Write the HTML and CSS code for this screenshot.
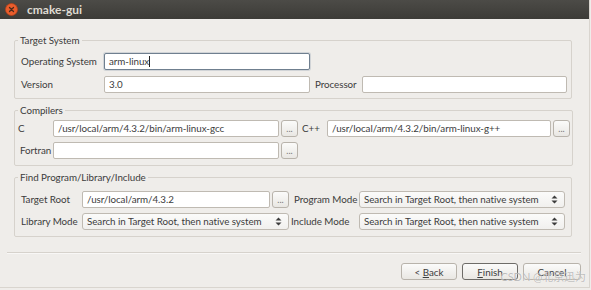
FILE: index.html
```html
<!DOCTYPE html>
<html lang="en">
<head>
    <meta charset="UTF-8">
    <title>cmake-gui</title>
    <link rel="stylesheet" href="styles.css">
</head>
<body>

    <div class="window">
        <div class="titlebar">
            <span class="close-btn">
                <svg width="13" height="13" viewBox="0 0 13 13">
                    <circle cx="6.5" cy="6.5" r="6" fill="#e95d2c" stroke="#b8431b" stroke-width="0.8"/>
                    <path d="M4.5 4.5 L8.5 8.5 M8.5 4.5 L4.5 8.5" stroke="#4a2a1c" stroke-width="1.3" stroke-linecap="round"/>
                </svg>
            </span>
            <span class="title">cmake-gui</span>
        </div>

        <div class="content">
            <!-- Target system -->
            <fieldset class="group group-target">
                <legend>Target System</legend>
                <div class="target-grid">
                    <label>Operating System</label>
                    <div class="input focused">arm-linux<span class="caret"></span></div>
                    <span></span>
                    <span></span>
                    <label>Version</label>
                    <div class="input">3.0</div>
                    <label>Processor</label>
                    <div class="input"></div>
                </div>
            </fieldset>

            <!-- Compilers -->
            <fieldset class="group group-compilers">
                <legend>Compilers</legend>
                <div class="compilers-grid">
                    <label>C</label>
                    <div class="input">/usr/local/arm/4.3.2/bin/arm-linux-gcc</div>
                    <button class="browse">...</button>
                    <label>C++</label>
                    <div class="input">/usr/local/arm/4.3.2/bin/arm-linux-g++</div>
                    <button class="browse">...</button>
                    <label>Fortran</label>
                    <div class="input"></div>
                    <button class="browse">...</button>
                </div>
            </fieldset>

            <!-- Find program / library / include -->
            <fieldset class="group group-find">
                <legend>Find Program/Library/Include</legend>
                <div class="find-grid">
                    <label>Target Root</label>
                    <div class="input">/usr/local/arm/4.3.2</div>
                    <button class="browse">...</button>
                    <label>Program Mode</label>
                    <div class="combo">Search in Target Root, then native system
                        <svg class="combo-arrows" width="7" height="9" viewBox="0 0 7 9"><path d="M3.5 0.5 L6.5 3.5 L0.5 3.5 Z M0.5 5.5 L6.5 5.5 L3.5 8.5 Z" fill="#3c3c3c"/></svg>
                    </div>
                    <label>Library Mode</label>
                    <div class="combo span-two">Search in Target Root, then native system
                        <svg class="combo-arrows" width="7" height="9" viewBox="0 0 7 9"><path d="M3.5 0.5 L6.5 3.5 L0.5 3.5 Z M0.5 5.5 L6.5 5.5 L3.5 8.5 Z" fill="#3c3c3c"/></svg>
                    </div>
                    <label>Include Mode</label>
                    <div class="combo">Search in Target Root, then native system
                        <svg class="combo-arrows" width="7" height="9" viewBox="0 0 7 9"><path d="M3.5 0.5 L6.5 3.5 L0.5 3.5 Z M0.5 5.5 L6.5 5.5 L3.5 8.5 Z" fill="#3c3c3c"/></svg>
                    </div>
                </div>
            </fieldset>

            <div class="separator"></div>

            <div class="buttons">
                <button class="btn">&lt; <u>B</u>ack</button>
                <button class="btn btn-default"><u>F</u>inish</button>
                <button class="btn">Cancel</button>
            </div>
        </div>

        <div class="watermark">CSDN @北京迅为</div>
    </div>

</body>
</html>
```

FILE: styles.css
```css
/* General reset */
* {
    margin: 0;
    padding: 0;
    box-sizing: border-box;
}

body {
    width: 591px;
    height: 290px;
    background: #efedea;
    font-family: Lato, "Noto Sans CJK SC", sans-serif;
    font-size: 9.8px;
    letter-spacing: -0.05px;
    color: #3c3c3c;
    overflow: hidden;
}

.window {
    position: relative;
    width: 590px;
    height: 288px;
    background: #efedea;
    border-right: 1px solid #d9d5cf;
    border-bottom: 1px solid #d9d5cf;
}

/* Title bar */
.titlebar {
    height: 19px;
    background: linear-gradient(#4c4b47, #3c3b37);
    display: flex;
    align-items: center;
    padding-left: 5px;
}

.close-btn {
    display: flex;
    width: 13px;
    height: 13px;
}

.title {
    margin-left: 9px;
    color: #dfdbd2;
    font-weight: bold;
    font-size: 12px;
    letter-spacing: 0;
}

/* Content */
.content {
    padding: 15px 17px 0 14px;
}

.group {
    border: 1px solid #d6d2cc;
    border-radius: 2px;
    padding: 0 2px 6px 6px;
}

.group legend {
    line-height: 12px;
    padding: 0 2px;
    margin-left: -3px;
}

.group-target {
    padding-top: 7px;
    padding-bottom: 5px;
}

.group-compilers {
    margin-top: 5px;
    padding-top: 4px;
    padding-left: 3px;
}

.group-compilers legend {
    margin-left: 0;
}

.group-find {
    margin-top: 5px;
    padding-top: 8px;
}

label {
    line-height: 17px;
    white-space: nowrap;
}

.target-grid {
    display: grid;
    grid-template-columns: 78px 206px 42px 205px;
    grid-auto-rows: 17px;
    column-gap: 5px;
    row-gap: 6px;
}

.compilers-grid {
    display: grid;
    grid-template-columns: 33px 226px 17px 25px 224px 17px;
    grid-auto-rows: 17px;
    column-gap: 2px;
    row-gap: 5px;
}

.compilers-grid .browse + label {
    margin-left: 2px;
}

.find-grid {
    display: grid;
    grid-template-columns: 59px 188px 17px 66px 206px;
    grid-auto-rows: 17px;
    column-gap: 2px;
    row-gap: 5px;
}

.find-grid .browse + label {
    margin-left: 3px;
}

.span-two {
    grid-column: span 2;
}

/* Inputs */
.input {
    background: #fff;
    border: 1px solid #bfbab2;
    border-radius: 2px;
    padding: 0 4px;
    line-height: 15px;
    white-space: nowrap;
    overflow: hidden;
}

.input.focused {
    border-color: #6f7f8f;
    box-shadow: 0 0 0 1px rgba(120, 140, 160, 0.25);
}

.caret {
    display: inline-block;
    width: 1px;
    height: 11px;
    background: #222;
    vertical-align: -2px;
}

.browse {
    font-family: inherit;
    font-size: 9px;
    color: #777;
    background: linear-gradient(#fbfbfa, #e9e7e3);
    border: 1px solid #b8b3ab;
    border-radius: 3px;
    line-height: 13px;
}

.combo {
    position: relative;
    background: linear-gradient(#fbfbfa, #f1f0ee);
    border: 1px solid #bfbab2;
    border-radius: 3px;
    padding: 0 4px;
    line-height: 15px;
    white-space: nowrap;
    overflow: hidden;
}

.combo-arrows {
    position: absolute;
    right: 6px;
    top: 3px;
}

/* Bottom buttons */
.separator {
    margin: 15px -9px 0 -7px;
    border-top: 1px solid #d6d2cc;
    border-bottom: 1px solid #f8f7f6;
}

.buttons {
    display: flex;
    justify-content: flex-end;
    gap: 5px;
    margin: 9px -9px 0 0;
}

.btn {
    width: 56px;
    height: 17px;
    font-family: inherit;
    font-size: 9.8px;
    color: #3c3c3c;
    background: linear-gradient(#fbfbfa, #e9e7e3);
    border: 1px solid #b8b3ab;
    border-radius: 3px;
}

.btn:last-child {
    width: 58px;
}

.btn-default {
    border-color: #6e6c68;
}

.watermark {
    position: absolute;
    right: 3px;
    bottom: 3px;
    font-size: 11px;
    color: rgba(110, 110, 110, 0.45);
    text-shadow: 0 0 1px #fff;
}
```
